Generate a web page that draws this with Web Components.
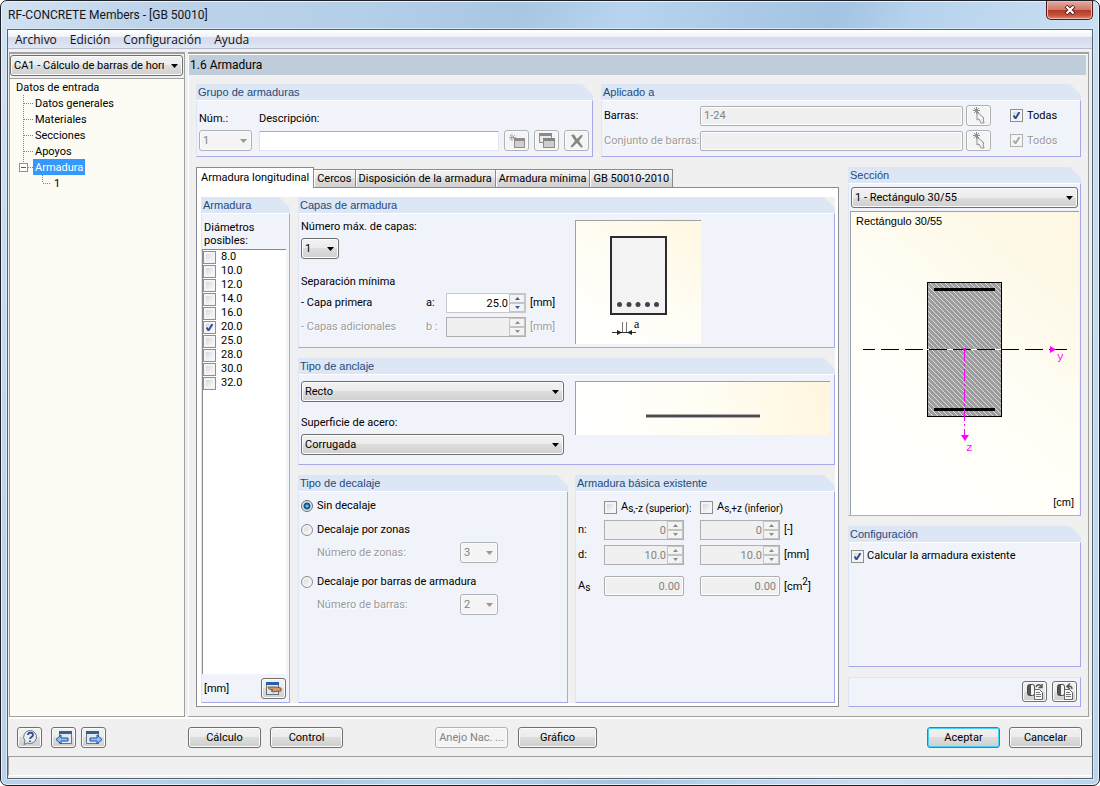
<!DOCTYPE html>
<html lang="es">
<head>
<meta charset="utf-8">
<meta name="viewport" content="width=device-width, initial-scale=1">
<title>RF-CONCRETE Members - [GB 50010]</title>
<style>
  body { margin: 0; font: 11px/14px Roboto, "Liberation Sans", Arial, sans-serif; color: #000; background: #fff; }
</style>
</head>
<body>
<concrete-app></concrete-app>
<script>
// Styles of the form controls, shared by every panel.
const controls = `
  :host { display: block; box-sizing: border-box; }
  *, *::before, *::after { box-sizing: border-box; }
  button, input, select { font: inherit; color: inherit; margin: 0; }
  label { white-space: nowrap; }
  .off { color: #9b9b9b; text-shadow: 1px 1px #fff; }
  button {
    height: 21px; padding: 0; border: 1px solid #707070; border-radius: 3px; white-space: nowrap;
    background: linear-gradient(#f2f2f2, #ebebeb 50%, #dddddd 50%, #cfcfcf);
    box-shadow: inset 0 0 0 1px #fcfcfc;
  }
  button.icon { width: 25px; flex: none; display: grid; place-items: center; }
  button:disabled { border-color: #adb2b5; background: #f4f4f4; color: #838383; }
  select {
    appearance: none; height: 21px; padding: 0 18px 0 3px; border: 1px solid #707070; border-radius: 3px;
    background:
      url("data:image/svg+xml,%3Csvg xmlns='http://www.w3.org/2000/svg' width='7' height='4'%3E%3Cpath d='M0 0h7L3.500 4z'/%3E%3C/svg%3E") right 4px center no-repeat,
      linear-gradient(#f2f2f2, #ebebeb 50%, #dddddd 50%, #cfcfcf);
    box-shadow: inset 0 0 0 1px #fcfcfc;
  }
  select:disabled {
    opacity: 1; color: #838383; border-color: #adb2b5;
    background:
      url("data:image/svg+xml,%3Csvg xmlns='http://www.w3.org/2000/svg' width='7' height='4'%3E%3Cpath fill='%23999' d='M0 0h7L3.500 4z'/%3E%3C/svg%3E") right 4px center no-repeat, #f4f4f4;
  }
  input.text {
    width: 100%; min-width: 0; height: 20px; padding: 0 3px; background: #fff;
    border: 1px solid #e2e3ea; border-top-color: #abadb3; border-radius: 1px;
  }
  input.text:disabled { background: #f0f0f0; color: #838383; border-color: #afafaf; box-shadow: inset 0 0 0 1px #fff; border-radius: 2px; }
  input.num { text-align: right; }
  input[type=checkbox], input[type=radio] {
    appearance: none; flex: none; width: 13px; height: 13px; border: 1px solid #8e8f8f;
    background: linear-gradient(135deg, #cbcfd5, #f6f6f6 75%); box-shadow: inset 0 0 0 2px #f4f4f4;
  }
  input[type=checkbox]:checked {
    background: url("data:image/svg+xml,%3Csvg xmlns='http://www.w3.org/2000/svg' width='11' height='11'%3E%3Cpath d='M2.500 5.500 4.500 8.500 8.500 2' fill='none' stroke='%23314a9b' stroke-width='2'/%3E%3C/svg%3E"), linear-gradient(135deg, #cbcfd5, #f6f6f6 75%);
  }
  input[type=checkbox]:disabled { border-color: #b1b1b1; }
  input[type=checkbox]:checked:disabled {
    background: url("data:image/svg+xml,%3Csvg xmlns='http://www.w3.org/2000/svg' width='11' height='11'%3E%3Cpath d='M2.500 5.500 4.500 8.500 8.500 2' fill='none' stroke='%23a8a8a8' stroke-width='2'/%3E%3C/svg%3E"), #f6f6f6;
  }
  input[type=radio] { width: 12px; height: 12px; border-radius: 50%; }
  input[type=radio]:checked { background: radial-gradient(circle at 50% 50%, #5cc4f0 0 1px, #17568c 2px 3px, #e6e6e6 4px); box-shadow: none; border-color: #6a6f78; }
`;

function define(name, css, html) {
  const template = document.createElement('template');
  template.innerHTML = `<style>${controls}${css}</style>${html}`;
  customElements.define(name, class extends HTMLElement {
    constructor() {
      super();
      this.attachShadow({ mode: 'open' }).append(template.content.cloneNode(true));
    }
  });
}

// Titled box with a cut corner.
define('group-box', `
  :host { display: flex; flex-direction: column; }
  .head {
    flex: none; height: 16px; padding-left: 2px; font: 11px/16px "Liberation Sans", Arial, sans-serif; color: #1f4a7c; white-space: nowrap;
    background: #dce6f4; clip-path: polygon(0 0, calc(100% - 11px) 0, 100% 11px, 100% 100%, 0 100%);
  }
  .body {
    flex: 1; display: flex; flex-direction: column; min-height: 0; padding: 0 2px;
    border: solid #a8a8e8; border-width: 0 1px 1px 1px; border-left-color: #dce6f4;
    border-top: 1px solid #fff; background: #f0f3f9;
  }
`, `<div class="head"><slot name="title"></slot></div><div class="body"><slot></slot></div>`);

// Number field with up and down buttons.
customElements.define('num-spin', class extends HTMLElement {
  connectedCallback() {
    const off = this.hasAttribute('disabled') ? 'disabled' : '';
    this.attachShadow({ mode: 'open' }).innerHTML = `<style>${controls}
      :host { width: 80px; height: 20px; white-space: normal; }
      .wrap { display: grid; grid-template-columns: 1fr 16px; height: 20px; border: 1px solid ${off ? '#afafaf' : '#c8c8cc'}; background: ${off ? '#f0f0f0' : '#fff'}; }
      input.text, input.text:disabled { height: 18px; border: 0; background: none; box-shadow: none; padding: 0 1px; }
      .spin { display: grid; grid-template-rows: 9px 9px; background: #b8b8b8; }
      .spin button { height: auto; border: 1px solid #c4c4c4; border-radius: 0; background: #f3f3f3; box-shadow: none; display: grid; place-items: center; }
      svg { display: block; fill: ${off ? '#8c8c8c' : '#2c62b8'}; }
    </style>
    <div class="wrap">
      <input class="text num" inputmode="decimal" aria-label="${this.getAttribute('label')}" value="${this.getAttribute('value') || ''}" ${off}>
      <div class="spin">
        <button tabindex="-1" aria-label="Aumentar" ${off}><svg width="5" height="3"><path d="M0 3h5L2.500 0z"/></svg></button>
        <button tabindex="-1" aria-label="Reducir" ${off}><svg width="5" height="3"><path d="M0 0h5L2.500 3z"/></svg></button>
      </div>
    </div>`;
  }
});

define('menu-bar', `
  nav {
    display: flex; gap: 13px; height: 19px; padding: 0 7px; font: 12px/19px "Open Sans", "Noto Sans", sans-serif;
    background: linear-gradient(#fff, #eef2f8 7px, #d6dcee 7px, #d8deef 12px, #dfe8f5);
    border-bottom: 1px solid #b6bccc;
  }
  a { color: #111; text-decoration: none; }
`, `<nav><a href="#archivo">Archivo</a><a href="#edicion">Edición</a><a href="#configuracion">Configuración</a><a href="#ayuda">Ayuda</a></nav>`);

// Outer window: caption, close button, glass border.
define('app-window', `
  :host {
    display: flex; flex-direction: column; min-height: 100vh; padding: 0 6px 6px;
    border: 1px solid #1d2026; border-radius: 7px; box-shadow: inset 0 0 0 1px #e9f3fc;
    background: linear-gradient(105deg, #d3e2f2 0, #bdd3ea 12%, #b4cfe8 28%, #a9c6e2 40%, #b8d4ee 48%, #a3c3e2 64%, #b6d2ec 70%, #c9dff3 84%, #b9d5ee);
  }
  header { display: flex; justify-content: space-between; height: 28px; padding-left: 1px; }
  h1 { margin: 0; font: 12px/28px Roboto, "Noto Sans", sans-serif; color: #10151c; }
  .close {
    width: 47px; height: 19px; border: 1px solid #541a17; border-top: 0; border-radius: 0 0 5px 5px; display: grid; place-items: center;
    background: linear-gradient(#e5aaa0, #cf7a6c 48%, #b03a26 50%, #c8543c 80%, #e08a68); box-shadow: inset 0 0 0 1px #f0b9ae;
  }
  main { flex: 1; display: flex; flex-direction: column; border: 1px solid #56636f; background: #f0f0f0; box-shadow: 0 0 0 1px #dbeaf8; }
`, `<header><h1><slot name="title"></slot></h1>
  <button class="close" aria-label="Cerrar"><svg width="12" height="10" viewBox="0 0 12 10"><path d="M2 1l8 8M10 1l-8 8" stroke="#5b1e19" stroke-width="4"/><path d="M2.500 1.500l7 7M9.500 1.500l-7 7" stroke="#fff" stroke-width="2.200"/></svg></button></header>
  <main><slot></slot></main>`);

define('nav-tree', `
  :host { display: flex; flex-direction: column; padding: 1px 1px 0 0; border: 1px solid #a0a0a0; border-width: 2px 1px 0 1px; }
  .pick { margin-bottom: 2px; width: 100%; }
  .tree { flex: 1; margin-right: -1px; border: solid #a0a0a0; border-width: 1px 0; background: #fcfcf4; }
  ul { list-style: none; margin: 0; padding: 0; }
  li > div { display: flex; height: 16px; line-height: 17px; padding-left: 6px; white-space: nowrap; }
  svg { flex: none; fill: none; stroke: #808080; stroke-dasharray: 1 1; shape-rendering: crispEdges; }
  .item { padding-left: 2px; }
  .sel { background: #3399ff; color: #fff; padding: 0 2px; }
`, `<select class="pick" aria-label="Caso de cálculo"><option>CA1 - Cálculo de barras de hormigón</option></select>
  <div class="tree"><ul>
    <li><div>Datos de entrada</div><ul>
      <li><div><svg width="17" height="16"><path d="M7.500 0v16M8 8.500h9"/></svg><span class="item">Datos generales</span></div></li>
      <li><div><svg width="17" height="16"><path d="M7.500 0v16M8 8.500h9"/></svg><span class="item">Materiales</span></div></li>
      <li><div><svg width="17" height="16"><path d="M7.500 0v16M8 8.500h9"/></svg><span class="item">Secciones</span></div></li>
      <li><div><svg width="17" height="16"><path d="M7.500 0v16M8 8.500h9"/></svg><span class="item">Apoyos</span></div></li>
      <li><div><svg width="17" height="16"><path d="M7.500 0v4M12 8.500h5"/><g stroke-dasharray="none"><path d="M3.500 4.500h8v8h-8z" fill="#fff" stroke="#919191"/><path d="M5 8.500h5" stroke="#3a5fa8"/></g></svg><span class="sel">Armadura</span></div><ul>
        <li><div><svg width="36" height="16"><path d="M26.500 0v8M27 8.500h8"/></svg><span class="item">1</span></div></li>
      </ul></li>
    </ul></li>
  </ul></div>`);

define('group-selector', `
  .grid { display: grid; grid-template-columns: 53px 1fr 25px 25px 25px; column-gap: 5px; row-gap: 4px; padding: 11px 1px 5px 0; align-items: center; }
  .desc { padding-left: 2px; }
  .desc-label { grid-column: 2 / -1; padding-left: 2px; }
  select { width: 53px; }
`, `<group-box><span slot="title">Grupo de armaduras</span><div class="grid">
    <label for="num">Núm.:</label><label for="desc" class="desc-label">Descripción:</label>
    <select id="num" disabled><option>1</option></select>
    <div class="desc"><input class="text" id="desc"></div>
    <button class="icon" disabled aria-label="Nuevo"><svg width="18" height="16"><path d="M4 1v7M1 4.500h7M2 2l5 5M7 2l-5 5" stroke="#a8a8a8"/><rect x="6.500" y="5.500" width="10" height="9" fill="#cfcfcf" stroke="#909090"/><path d="M6 6h11v2H6z" fill="#8a8a8a"/></svg></button>
    <button class="icon" disabled aria-label="Copiar"><svg width="18" height="17"><rect x="1.500" y="1.500" width="12" height="9" fill="#e8e8e8" stroke="#8d8d8d"/><path d="M1 1h13v3H1z" fill="#8a8a8a"/><rect x="5.500" y="6.500" width="11" height="9" fill="#cdcdcd" stroke="#8d8d8d"/><path d="M5 6h12v3H5z" fill="#838383"/></svg></button>
    <button class="icon" disabled aria-label="Eliminar"><svg width="14" height="14"><path d="M1 1l3-.5L7 5l4-4 2 .5-4 5.500 4 6-2 .5-4-4.500-5 4.500-1.500-1L5 7z" fill="#858585"/></svg></button>
  </div></group-box>`);

const pickIcon = `<svg width="14" height="17"><path d="M2 1l5 5M7 1L2 6M1 3.500h7M4.500 0v7" stroke="#8e8e8e" fill="none"/><path d="M5 5v8l2-1 2 4h3l-1-4 1-1z" fill="#f4f4f4" stroke="#909090"/></svg>`;
define('applied-to', `
  .grid { display: grid; grid-template-columns: 93px 1fr 25px 84px; column-gap: 3px; row-gap: 4px; grid-auto-rows: 21px; padding: 4px 0 5px; align-items: center; }
  .check { display: flex; align-items: center; gap: 4px; padding-left: 16px; }
`, `<group-box><span slot="title">Aplicado a</span><div class="grid">
    <label for="bars">Barras:</label><input class="text" id="bars" value="1-24" disabled>
    <button class="icon" disabled aria-label="Seleccionar barras">${pickIcon}</button>
    <label class="check"><input type="checkbox" checked>Todas</label>
    <label for="sets" class="off">Conjunto de barras:</label><input class="text" id="sets" disabled>
    <button class="icon" disabled aria-label="Seleccionar conjuntos">${pickIcon}</button>
    <label class="check off"><input type="checkbox" checked disabled>Todos</label>
  </div></group-box>`);

define('tab-strip', `
  :host { display: flex; flex-direction: column; }
  .tabs { display: flex; align-items: flex-end; height: 20px; }
  .tabs button {
    height: 18px; padding: 0 3px; border: solid #8a8a94; border-width: 1px 1px 0 0; border-radius: 0;
    background: linear-gradient(#f3f3f3, #ebebeb 50%, #dedede 50%, #d0d0d0); box-shadow: inset 1px 1px #fff;
  }
  .tabs button[aria-selected=true] { height: 21px; margin-bottom: -1px; padding: 0 4px; border-width: 1px 1px 0; background: #fff; z-index: 1; }
  .page { flex: 1; display: flex; padding: 9px 3px 3px 4px; border: 1px solid #8a8a94; background: #fff; }
  ::slotted(*) { flex: 1; min-width: 0; }
`, `<div class="tabs" role="tablist">
    <button role="tab" aria-selected="true">Armadura longitudinal</button><button role="tab">Cercos</button><button role="tab">Disposición de la armadura</button><button role="tab">Armadura mínima</button><button role="tab">GB 50010-2010</button>
  </div><div class="page" role="tabpanel"><slot></slot></div>`);

define('diameter-list', `
  :host { display: flex; }
  group-box { flex: 1; min-width: 0; }
  .cap { line-height: 13px; padding: 7px 0 2px; }
  .list { flex: 1; margin: 0 1px 0 -2px; border: solid #8a8a8a; border-width: 1px 0 0 1px; background: #fff; }
  .list label { display: flex; align-items: center; gap: 5px; height: 14px; }
  .foot { display: flex; justify-content: space-between; align-items: center; padding: 4px 1px 3px 0; }
`, `<group-box><span slot="title">Armadura</span>
    <div class="cap">Diámetros<br>posibles:</div>
    <div class="list">${['8.0', '10.0', '12.0', '14.0', '16.0', '20.0', '25.0', '28.0', '30.0', '32.0']
      .map(d => `<label><input type="checkbox" ${d === '20.0' ? 'checked' : ''}>${d}</label>`).join('')}</div>
    <div class="foot"><span>[mm]</span><button class="icon" aria-label="Editar diámetros"><svg width="17" height="15"><rect x="1.500" y="1.500" width="12" height="12" fill="#dfe7ef" stroke="#65707c"/><path d="M1 1h13v3H1z" fill="#2f5da8"/><path d="M3 6h8l5 1v3l-5 .5-3 .5-2-1 2-1-4-1z" fill="#d49a6c" stroke="#6e4124" stroke-width=".8"/></svg></button></div>
  </group-box>`);

define('layers-panel', `
  .cols { display: grid; grid-template-columns: 274px 1fr; padding: 6px 0 3px; }
  .left { display: flex; flex-direction: column; align-items: flex-start; }
  .left select { width: 38px; margin: 4px 0 16px; }
  .row { display: grid; grid-template-columns: 125px 20px 80px 1fr; align-items: center; height: 20px; margin-top: 4px; white-space: nowrap; }
  .unit { padding-left: 4px; }
  svg { display: block; border: solid #a0a0a0; border-width: 1px 0 0 1px; background: linear-gradient(35deg, #fff, #fffdf4 50%, #fff7e0); }
`, `<group-box><span slot="title">Capas de armadura</span><div class="cols">
    <div class="left">
      <label for="layers">Número máx. de capas:</label>
      <select id="layers"><option>1</option></select>
      <div>Separación mínima</div>
      <div class="row"><span>- Capa primera</span><span>a:</span><num-spin label="Capa primera" value="25.0"></num-spin><span class="unit">[mm]</span></div>
      <div class="row off"><span>- Capas adicionales</span><span>b :</span><num-spin label="Capas adicionales" disabled></num-spin><span class="unit">[mm]</span></div>
    </div>
    <svg width="126" height="124" viewBox="0 0 125 123" role="img" aria-label="Separación a">
      <rect x="35" y="16" width="55" height="77" fill="#f3f3f4" stroke="#2b2b31" stroke-width="2"/>
      <g fill="#444"><circle cx="43.500" cy="83.500" r="2.500"/><circle cx="53" cy="83.500" r="2.500"/><circle cx="62" cy="83.500" r="2.500"/><circle cx="71.500" cy="83.500" r="2.500"/><circle cx="80.500" cy="83.500" r="2.500"/></g>
      <path d="M46.500 101v11M50.500 101v11" stroke="#777"/><path d="M36 111.500h24" stroke="#333"/><path d="M41 109l5 2.500-5 2.500zM56 109l-5 2.500 5 2.500z" fill="#222"/>
      <text x="58" y="107" font-family="Liberation Serif, serif" font-size="12">a</text>
    </svg>
  </div></group-box>`);

define('anchorage-panel', `
  .cols { display: grid; grid-template-columns: 274px 1fr; padding: 6px 2px 9px 0; }
  .left { display: flex; flex-direction: column; padding-right: 11px; }
  .left label { margin: 14px 0 4px; }
  .pic { height: 54px; display: grid; place-items: center; padding-top: 14px; border: solid #a0a0a0; border-width: 1px 0 0 1px; background: linear-gradient(75deg, #fff, #fffdf4 50%, #fff6de); }
  svg { width: 45%; height: 4px; display: block; }
`, `<group-box><span slot="title">Tipo de anclaje</span><div class="cols">
    <div class="left"><select aria-label="Tipo de anclaje"><option>Recto</option></select>
      <label for="surface">Superficie de acero:</label><select id="surface"><option>Corrugada</option></select></div>
    <div class="pic"><svg role="img" aria-label="Barra recta"><rect width="100%" height="4" fill="#aaa"/><rect y="1" width="100%" height="2" fill="#4c4c50"/></svg></div>
  </div></group-box>`);

define('curtailment-panel', `
  :host { display: flex; }
  group-box { flex: 1; min-width: 0; }
  .radio { display: flex; align-items: center; gap: 4px; height: 14px; margin-top: 10px; }
  .radio:first-of-type { margin-top: 7px; }
  .sub { display: grid; grid-template-columns: 143px 38px; align-items: center; margin: 5px 0 2px 16px; }
`, `<group-box><span slot="title">Tipo de decalaje</span>
    <label class="radio"><input type="radio" name="cut" checked>Sin decalaje</label>
    <label class="radio"><input type="radio" name="cut">Decalaje por zonas</label>
    <div class="sub"><label class="off" for="zones">Número de zonas:</label><select id="zones" disabled><option>3</option></select></div>
    <label class="radio"><input type="radio" name="cut">Decalaje por barras de armadura</label>
    <div class="sub"><label class="off" for="count">Número de barras:</label><select id="count" disabled><option>2</option></select></div>
  </group-box>`);

define('basic-panel', `
  :host { display: flex; }
  group-box { flex: 1; min-width: 0; }
  .grid { display: grid; grid-template-columns: 26px 80px 96px 1fr; align-items: center; padding-top: 7px; row-gap: 5px; }
  .bot { padding-left: 16px; }
  num-spin.bot { width: 96px; }
  .check { display: flex; align-items: center; gap: 4px; height: 16px; width: 96px; }
  .check.bot { width: auto; }
  .unit { padding-left: 4px; }
  small { font-size: 10px; line-height: 8px; position: relative; top: 2px; }
  sup { font-size: 10px; line-height: 8px; }
  .last { padding-top: 6px; }
`, `<group-box><span slot="title">Armadura básica existente</span><div class="grid">
    <span></span><label class="check"><input type="checkbox"><span>A<small>s,-z (superior):</small></span></label><label class="check bot"><input type="checkbox"><span>A<small>s,+z (inferior)</small></span></label><span></span>
    <span>n:</span><num-spin disabled label="n superior" value="0"></num-spin><num-spin class="bot" disabled label="n inferior" value="0"></num-spin><span class="unit">[-]</span>
    <span>d:</span><num-spin disabled label="d superior" value="10.0"></num-spin><num-spin class="bot" disabled label="d inferior" value="10.0"></num-spin><span class="unit">[mm]</span>
    <span class="last">A<small>s</small></span><div class="last"><input class="text num" aria-label="As superior" value="0.00" disabled></div><div class="bot last"><input class="text num" aria-label="As inferior" value="0.00" disabled></div><span class="unit last">[cm<sup>2</sup>]</span>
  </div></group-box>`);

define('longitudinal-page', `
  :host { display: grid; grid-template-columns: 89px 1fr; gap: 8px; background: #f0f0f0; }
  .right { display: flex; flex-direction: column; gap: 10px; min-width: 0; }
  .bottom { flex: 1; display: grid; grid-template-columns: 270fr 260fr; gap: 7px; }
`, `<diameter-list></diameter-list><div class="right"><layers-panel></layers-panel><anchorage-panel></anchorage-panel>
    <div class="bottom"><curtailment-panel></curtailment-panel><basic-panel></basic-panel></div></div>`);

define('section-panel', `
  :host { display: flex; }
  group-box { flex: 1; min-width: 0; }
  select { margin: 3px 0 3px; width: 100%; }
  .view { flex: 1; display: flex; flex-direction: column; padding: 2px 5px 6px; margin: 0 -1px; font-family: "Liberation Sans", Arial, sans-serif; border: solid #a0a0a0; border-width: 1px 0 0 1px; background: linear-gradient(40deg, #fff, #fffef6 50%, #fdf8e6 85%, #fff7e4); }
  svg { flex: 1; display: block; min-height: 240px; margin: 0 -5px; }
  .unit { text-align: right; }
`, `<group-box><span slot="title">Sección</span>
    <select aria-label="Sección"><option>1 - Rectángulo 30/55</option></select>
    <div class="view"><span>Rectángulo 30/55</span>
      <svg viewBox="0 -1 228 267" role="img" aria-label="Sección transversal">
        <defs><pattern id="hatch" width="5" height="5" patternUnits="userSpaceOnUse"><rect width="5" height="5" fill="#9c9c9c"/><path d="M-1-1l7 7M-1 4l2 2M4-1l2 2" stroke="#dcdcdc"/></pattern></defs>
        <rect x="76.500" y="53.500" width="74" height="134" fill="url(#hatch)" stroke="#000"/>
        <path d="M83 60.500h61M83 180.500h61" stroke="#000" stroke-width="3"/>
        <path d="M76 120.500h75" stroke="#fff"/>
        <path d="M12 120.500h205" stroke="#000" stroke-dasharray="18 6" stroke-dashoffset="6"/>
        <path d="M113.500 120v88" stroke="#f0f" stroke-dasharray="12 3 2 3"/>
        <path d="M112 119h3v3h-3zM110 206h8l-4 6zM199 117v7l6-3.500z" fill="#f0f"/>
        <g fill="#f0f" font-family="Liberation Mono, monospace" font-size="11"><text x="206" y="131">y</text><text x="115" y="222">z</text></g>
      </svg>
      <span class="unit">[cm]</span></div>
  </group-box>`);

define('config-panel', `
  :host { display: flex; min-height: 141px; }
  group-box { flex: 1; min-width: 0; }
  label { display: flex; align-items: center; gap: 3px; margin-top: 6px; }
`, `<group-box><span slot="title">Configuración</span><label><input type="checkbox" checked>Calcular la armadura existente</label></group-box>`);

const book = `<rect x="1.500" y="1.500" width="7" height="11" rx="2" fill="#f4f4f4" stroke="#444"/><path d="M2 2h3v10H2z" fill="#555"/><path d="M8.500 6.500h5l3 3v7h-8z" fill="#f8f8f8" stroke="#666"/><path d="M10 9.500h4M10 11.500h5M10 13.500h5" stroke="#777"/>`;
define('transfer-bar', `
  :host { display: flex; justify-content: flex-end; gap: 5px; padding: 3px; height: 30px; border: 1px solid #a8a8e8; border-top-color: #dce6f4; border-left-color: #dce6f4; background: #f0f3f9; }
`, `<button class="icon" aria-label="Exportar"><svg width="18" height="18">${book}<path d="M10 4c1-3 4-3 5-.5M16 1v3.500h-3.500" fill="none" stroke="#555" stroke-width="1.500"/></svg></button>
  <button class="icon" aria-label="Importar"><svg width="18" height="18">${book}<path d="M16 6c0-3-2-3-4-2.500M14 .500l-3 3L14 6" fill="none" stroke="#555" stroke-width="1.500"/></svg></button>`);

define('work-area', `
  :host { flex: 1; min-width: 0; display: flex; flex-direction: column; padding: 1px 2px 0 1px; border: 1px solid #a0a0a0; border-width: 2px 1px 1px 0; background: #f0f0f0; box-shadow: inset 1px 1px #fff; }
  h2 { margin: 0; height: 20px; padding-left: 1px; background: #bfccda; font: 12px/21px Roboto, "Noto Sans", sans-serif; }
  .all { flex: 1; display: flex; flex-direction: column; gap: 10px; padding: 9px 5px 9px 7px; }
  .top { display: grid; grid-template-columns: 397fr 480fr; gap: 8px; }
  .main { flex: 1; display: grid; grid-template-columns: 1fr 233px; gap: 9px; }
  .side { display: flex; flex-direction: column; gap: 10px; }
  section-panel { flex: 1; }
`, `<h2>1.6 Armadura</h2><div class="all">
    <div class="top"><group-selector></group-selector><applied-to></applied-to></div>
    <div class="main"><tab-strip><longitudinal-page></longitudinal-page></tab-strip>
      <div class="side"><section-panel></section-panel><config-panel></config-panel><transfer-bar></transfer-bar></div></div>
  </div>`);

const sheet = `<path d="M4.500 1.500h12v12h-12z" fill="#e4e9ee" stroke="#6d7680"/><path d="M4 1h13v3H4z" fill="#3a5f98"/>`;
define('action-bar', `
  :host { display: flex; align-items: center; height: 39px; padding: 2px 10px 0 9px; box-shadow: inset 0 2px #fff; }
  button { width: 73px; }
  .pair { display: flex; gap: 9px; }
  .pair.icons { gap: 5px; margin: 0 82px 0 9px; }
  .mid { gap: 10px; margin: 0 auto 0 92px; }
  .wide { width: 79px; }
  .ok { border-color: #2c86b8; box-shadow: inset 0 0 0 1px #48d0f8; }
`, `<button class="icon" aria-label="Ayuda"><svg width="18" height="17"><path d="M9 1.500a6.500 6.500 0 1 1-2.500 12.500L3 15.500l1-3.500A6.500 6.500 0 0 1 9 1.500z" fill="#e9edf2" stroke="#6f7680"/><path d="M7 6c0-3 5-3 5 0 0 2-3 2-3 4M9 11.500v1.500" fill="none" stroke="#33508c" stroke-width="1.800"/></svg></button>
  <div class="pair icons">
    <button class="icon" aria-label="Anterior"><svg width="18" height="16">${sheet}<path d="M1 9.500l5-4.500v3h7v3H6v3z" fill="#8fc3f2" stroke="#1c4fa0"/></svg></button>
    <button class="icon" aria-label="Siguiente"><svg width="18" height="16"><path d="M1.500 1.500h12v12h-12z" fill="#e4e9ee" stroke="#6d7680"/><path d="M1 1h13v3H1z" fill="#3a5f98"/><path d="M17 9.500l-5-4.500v3H5v3h7v3z" fill="#8fc3f2" stroke="#1c4fa0"/></svg></button>
  </div>
  <div class="pair"><button>Cálculo</button><button>Control</button></div>
  <div class="pair mid"><button disabled>Anejo Nac. ...</button><button class="wide">Gráfico</button></div>
  <div class="pair"><button class="ok">Aceptar</button><button>Cancelar</button></div>`);

define('concrete-app', `
  .split { flex: 1; display: grid; grid-template-columns: 176px 1fr; gap: 3px; margin-top: 3px; padding: 0 3px 0 1px; }
  .status { height: 20px; margin-bottom: 2px; border: solid #a0a0a0; border-width: 1px 0 0 1px; border-bottom: 1px solid #fff; }
`, `<app-window><span slot="title">RF-CONCRETE Members - [GB 50010]</span>
    <menu-bar></menu-bar>
    <div class="split"><nav-tree></nav-tree><work-area></work-area></div>
    <action-bar></action-bar><div class="status"></div>
  </app-window>`);
</script>
</body>
</html>
